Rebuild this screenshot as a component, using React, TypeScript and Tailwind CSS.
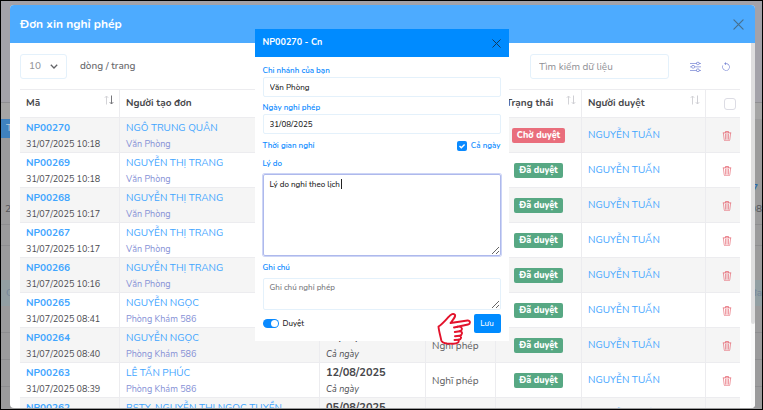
import React from "react";
import { BsTrash3, BsSliders, BsArrowCounterclockwise } from "react-icons/bs";

type Leave = {
  code: string;
  created: string;
  name: string;
  branch: string;
  date: string;
  pending?: boolean;
};

const rows: Leave[] = [
  { code: "NP00270", created: "31/07/2025 10:18", name: "NGÔ TRUNG QUÂN", branch: "Văn Phòng", date: "31/08/2025", pending: true },
  { code: "NP00269", created: "31/07/2025 10:18", name: "NGUYỄN THỊ TRANG", branch: "Văn Phòng", date: "30/08/2025" },
  { code: "NP00268", created: "31/07/2025 10:17", name: "NGUYỄN THỊ TRANG", branch: "Văn Phòng", date: "24/08/2025" },
  { code: "NP00267", created: "31/07/2025 10:17", name: "NGUYỄN THỊ TRANG", branch: "Văn Phòng", date: "17/08/2025" },
  { code: "NP00266", created: "31/07/2025 10:16", name: "NGUYỄN THỊ TRANG", branch: "Văn Phòng", date: "10/08/2025" },
  { code: "NP00265", created: "31/07/2025 08:41", name: "NGUYỄN NGỌC", branch: "Phòng Khám 586", date: "27/08/2025" },
  { code: "NP00264", created: "31/07/2025 08:40", name: "NGUYỄN NGỌC", branch: "Phòng Khám 586", date: "20/08/2025" },
  { code: "NP00263", created: "31/07/2025 08:39", name: "LÊ TẤN PHÚC", branch: "Phòng Khám 586", date: "12/08/2025" },
  { code: "NP00262", created: "31/07/2025 08:38", name: "BSTY. NGUYỄN THỊ NGỌC TUYỀN", branch: "Phòng Khám 586", date: "05/08/2025" },
];

function CloseIcon({ className }: { className: string }) {
  return (
    <svg viewBox="0 0 12 12" className={className} fill="none" stroke="currentColor" strokeWidth="1.3" strokeLinecap="round">
      <path d="M1 1 11 11M11 1 1 11" />
    </svg>
  );
}

function SortIcon({ desc = false }: { desc?: boolean }) {
  return (
    <svg viewBox="0 0 10 10" className="mt-[5px] h-[10px] w-[10px] shrink-0" fill="none" strokeWidth="1">
      <path d="M2.5 9.5V1M.8 2.8 2.5 1l1.7 1.8" stroke="#d3d3d7" />
      <path d="M7.5.5V9M5.8 7.2 7.5 9l1.7-1.8" stroke={desc ? "#77777c" : "#cfcfd4"} />
    </svg>
  );
}

function Head({ children, desc, pad = "pl-[6px]" }: { children: React.ReactNode; desc?: boolean; pad?: string }) {
  return (
    <th scope="col" className="border-y border-r border-[#ececef] p-0 text-left text-[10px] font-bold text-[#47474b]">
      <div className={`flex h-[27px] items-start justify-between pr-[5px] ${pad}`}>
        <span className="leading-[27px]">{children}</span>
        <SortIcon desc={desc} />
      </div>
    </th>
  );
}

function Row({ row, index }: { row: Leave; index: number }) {
  const cell = "border-r border-b border-[#ececef] px-[6px] pt-[2px] pb-0";
  return (
    <tr className={`h-[35px] ${index % 2 === 0 ? "bg-[#f5f5f5]" : "bg-white"}`}>
      <td className={cell}>
        <a href="#" className="block text-[10px] font-bold leading-4 text-[#3fa5ff]">{row.code}</a>
        <span className="block text-[9px] leading-4 text-[#4c4c51]">{row.created}</span>
      </td>
      <td className={cell}>
        <a href="#" className="block text-[10px] leading-4 text-[#3fa5ff]">{row.name}</a>
        <span className="block text-[9px] leading-4 text-[#8691d6]">{row.branch}</span>
      </td>
      <td className={cell}>
        <span className="block text-[11px] font-bold leading-4 text-[#47474b]">{row.date}</span>
        <span className="block text-[9px] italic leading-4 text-[#4c4c51]">Cả ngày</span>
      </td>
      <td className={`${cell} text-[10px] text-[#5c5c60]`}>Nghĩ phép</td>
      <td className="border-r border-b border-[#ececef] p-0">
        <span className={`mx-auto block w-fit rounded-[2px] px-[5px] text-[9px] font-extrabold leading-[15px] text-white ${row.pending ? "bg-[#e96e7c]" : "bg-[#57a883]"}`}>
          {row.pending ? "Chờ duyệt" : "Đã duyệt"}
        </span>
      </td>
      <td className="border-r border-b border-[#ececef] px-[6px] py-0">
        <a href="#" className="block text-[10px] leading-4 text-[#3fa5ff]">NGUYỄN TUẤN</a>
      </td>
      <td className="border-b border-[#ececef] pl-[8px] text-center">
        <button type="button" aria-label="Xóa" className="align-middle text-[#e5636f]">
          <BsTrash3 className="h-[10px] w-[10px]" />
        </button>
      </td>
    </tr>
  );
}

function Backdrop() {
  return (
    <div className="absolute inset-0 flex flex-col bg-[#9b9b9c] text-[10px] text-[#55565a]">
      <div className="h-[102px] border-b border-[#8f8f92] bg-[#a3a2a9]" />
      <div className="h-4 bg-[#a5a5a5]" />
      <div className="h-[19px] w-[120px] bg-[#3f82bf] pl-[5px] leading-[19px] text-[#b9c9d8]">T</div>
      <div className="flex h-[60px] items-end justify-end pr-1 font-bold text-[#2b6cae]"><span className="leading-5">7</span></div>
      <div className="flex h-[27px] justify-between border-b border-[#8e8e90] pl-1 leading-[22px]"><span>2</span><span>08</span></div>
      <div className="h-5" />
      <div className="h-[35px] border-t border-[#8e8e90]" />
      <div className="flex h-[26px] justify-between bg-[#929fa3] pl-[5px] leading-[26px] text-[#75869a]"><span>C</span><span>đa</span></div>
      <div className="h-[27px] border-b border-[#8e8e90]" />
      <div className="h-[27px] border-b border-[#8e8e90]" />
      <div className="h-[27px] border-b border-[#8e8e90]" />
    </div>
  );
}

function PointingHand() {
  return (
    <svg viewBox="0 0 34 34" className="absolute top-[-2px] right-[30px] h-[34px] w-[34px]" fill="white" stroke="#e3132c" strokeWidth="1.9" strokeLinecap="round" strokeLinejoin="round">
      <path d="M1.5 14.5C5 12.5 8 9 11.500 5C14 1.8 16.5 1.3 17.8 2.7C19 4.2 17 6.5 13.5 11L30.5 8.5C33.5 8.2 33.7 12 31 12.5L20.5 14.8C25.5 14 26.2 18 22.8 19.2C26 19.5 25.5 23 22.5 23.8C25 24.5 24.3 27.5 21.5 27.8C22.5 30.5 20 31.8 16.5 31.8L10 31.5C7.5 31.2 5 30.5 4.3 28.5C3.5 24 1.8 19 1.5 14.5Z" />
      <path d="M20.5 14.8 17 15.5M22.8 19.2 17.8 20M22.5 23.8 18 24.2M21.5 27.8 17.5 28" fill="none" />
    </svg>
  );
}

function ListDialog() {
  return (
    <section role="dialog" aria-labelledby="list-title" className="absolute top-[5px] right-2 bottom-[2px] left-[10px] flex flex-col overflow-hidden rounded-[4px] bg-white">
      <header className="flex h-[38px] shrink-0 items-center justify-between bg-[#4dabff] pr-[11px] pl-[10px]">
        <h1 id="list-title" className="text-[12px] font-bold text-white">Đơn xin nghỉ phép</h1>
        <button type="button" aria-label="Đóng" className="text-[#47708f]"><CloseIcon className="h-[11px] w-[11px]" /></button>
      </header>
      <div className="flex min-h-0 flex-1">
        <div className="min-w-0 flex-1 overflow-hidden pr-[11px] pl-[10px]">
          <div className="flex h-[46px] items-center pt-[1px]">
            <label className="flex items-center text-[10px] font-medium text-[#66666a]">
              <span className="relative mr-[13px] block">
                <select aria-label="Số dòng" defaultValue="10" className="block h-[25px] w-[47px] appearance-none rounded-[3px] border border-[#e4f1fb] bg-white pl-[8px] text-[10px] text-[#939499]">
                  <option>10</option>
                </select>
                <svg viewBox="0 0 8 5" className="pointer-events-none absolute top-[10px] right-[9px] h-[5px] w-2" fill="none" stroke="#626367" strokeWidth="1.3"><path d="m.8.8 3.2 3.2L7.2.8" /></svg>
              </span>
              dòng / trang
            </label>
            <input type="search" aria-label="Tìm kiếm" placeholder="Tìm kiếm dữ liệu" className="ml-auto h-[25px] w-[139px] rounded-[3px] border border-[#e4f1fb] px-2 text-[10px] placeholder:text-[#8f9095]" />
            <button type="button" aria-label="Bộ lọc" className="ml-[21px] text-[#7d8ad6]"><BsSliders className="h-[11px] w-[11px]" /></button>
            <button type="button" aria-label="Tải lại" className="mr-[9px] ml-[20px] text-[#7d8ad6]"><BsArrowCounterclockwise className="h-[10px] w-[10px]" /></button>
          </div>
          <table className="w-full table-fixed border-separate border-spacing-0">
            <colgroup>
              <col className="w-[100px]" />
              <col />
              <col className="w-[106px]" />
              <col className="w-[70px]" />
              <col className="w-[86px]" />
              <col className="w-[124px]" />
              <col className="w-[34px]" />
            </colgroup>
            <thead>
              <tr>
                <Head desc>Mã</Head>
                <Head>Người tạo đơn</Head>
                <Head>Ngày nghỉ</Head>
                <Head>Loại</Head>
                <Head pad="pl-[10px]">Trạng thái</Head>
                <Head>Người duyệt</Head>
                <th scope="col" className="border-y border-[#ececef] p-0 pl-[14px]">
                  <input type="checkbox" aria-label="Chọn tất cả" className="mx-auto block h-3 w-3 appearance-none rounded-[3px] border border-[#dcdce4] bg-white" />
                </th>
              </tr>
            </thead>
            <tbody>
              {rows.map((row, i) => <Row key={row.code} row={row} index={i} />)}
            </tbody>
          </table>
        </div>
        <div className="w-1 shrink-0 bg-[#fafafa]"><div className="h-[77%] rounded-b bg-[#dededf]" /></div>
      </div>
    </section>
  );
}

function EditDialog() {
  const label = "block text-[8px] font-semibold leading-[12px] text-[#0a8aff]";
  const field = "block w-full rounded-[2px] border border-[#e4f1fb] bg-white px-[6px] text-[8px] font-medium text-[#222]";
  return (
    <div className="absolute inset-x-0 top-[29px] flex justify-center">
      <form role="dialog" aria-labelledby="edit-title" className="w-[254px] bg-white">
        <header className="flex h-7 items-center justify-between bg-[#008bff] px-2">
          <h2 id="edit-title" className="text-[9px] font-bold text-white">NP00270 - Cn</h2>
          <button type="button" aria-label="Đóng" className="text-[#123a5e]"><CloseIcon className="h-[9px] w-[9px]" /></button>
        </header>
        <div className="px-2 pt-2 pb-2">
          <label htmlFor="branch" className={label}>Chi nhánh của bạn</label>
          <input id="branch" defaultValue="Văn Phòng" className={`${field} h-5`} />
          <label htmlFor="day" className={`${label} mt-[5px]`}>Ngày nghỉ phép</label>
          <input id="day" defaultValue="31/08/2025" className={`${field} h-5`} />
          <div className="mt-[5px] flex h-[14px] items-center justify-between">
            <span className={label}>Thời gian nghỉ</span>
            <label className="flex items-center gap-1 text-[8px] font-semibold leading-[12px] text-[#0a8aff]">
              <span className="relative block h-[10px] w-[10px]">
                <input type="checkbox" defaultChecked className="block h-[10px] w-[10px] appearance-none rounded-[2px] bg-[#0a8aff]" />
                <svg viewBox="0 0 10 10" className="pointer-events-none absolute inset-0" fill="none" stroke="white" strokeWidth="1.4"><path d="m2.5 5 1.8 1.8L7.6 3.5" /></svg>
              </span>
              Cả ngày
            </label>
          </div>
          <label htmlFor="reason" className={`${label} mt-[5px] mb-[4px]`}>Lý do</label>
          <div className="relative">
            <textarea id="reason" defaultValue="Lý do nghỉ theo lịch" className="block h-[82px] w-full rounded-[2px] border border-[#aeb9ec] px-[6px] py-[4px] text-[8px] font-medium leading-[12px] text-[#222] ring-1 ring-[#cdd5f6] outline-none" />
            <span className="pointer-events-none absolute top-[5px] left-[78px] h-[10px] w-px bg-[#222]" />
          </div>
          <label htmlFor="note" className={`${label} mt-[6px] mb-[4px]`}>Ghi chú</label>
          <textarea id="note" placeholder="Ghi chú nghỉ phép" className={`${field} h-8 py-[3px] leading-[12px] placeholder:text-[#77787d]`} />
          <div className="relative mt-1 flex items-center justify-between">
            <label className="flex items-center gap-1 text-[8px] font-medium text-[#222]">
              <span className="relative block h-[9px] w-4">
                <input type="checkbox" role="switch" defaultChecked className="block h-[9px] w-4 appearance-none rounded-full bg-[#0a8aff]" />
                <span className="pointer-events-none absolute top-px right-px h-[7px] w-[7px] rounded-full bg-white" />
              </span>
              Duyệt
            </label>
            <PointingHand />
            <button type="submit" className="h-[19px] w-[27px] rounded-[2px] bg-[#008bff] text-[8px] font-medium text-white">Lưu</button>
          </div>
        </div>
      </form>
    </div>
  );
}

export default function App() {
  return (
    <main className="relative h-screen overflow-hidden bg-black p-px font-['Nunito','Roboto','Noto_Sans',sans-serif]">
      <div className="relative h-full overflow-hidden">
        <Backdrop />
      </div>
      <ListDialog />
      <EditDialog />
    </main>
  );
}
